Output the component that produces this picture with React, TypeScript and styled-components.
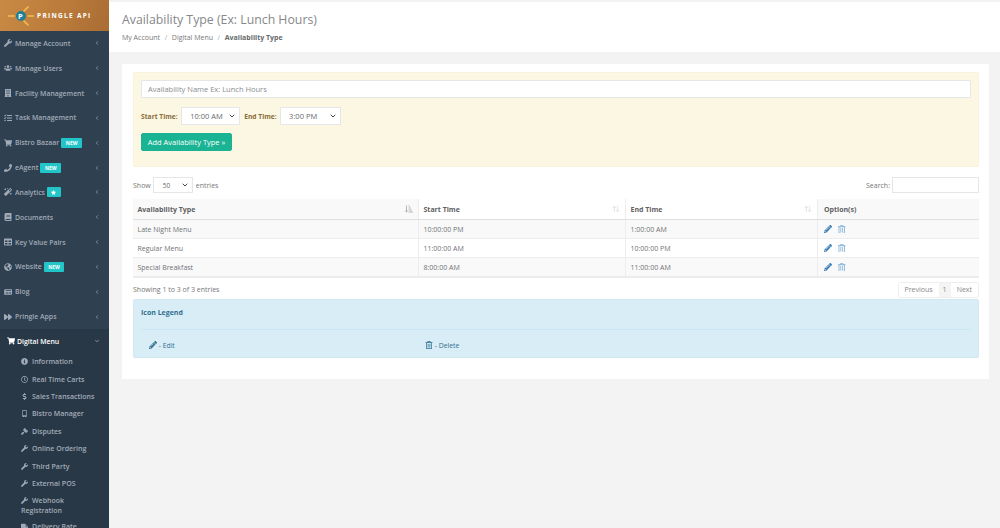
import styled, { createGlobalStyle } from "styled-components";
import { ReactNode } from "react";
import { ArrowUpDown, ChevronDown, ChevronLeft } from "lucide-react";
import {
  FaWrench,
  FaUsers,
  FaBuilding,
  FaTasks,
  FaShoppingCart,
  FaPhone,
  FaMagic,
  FaBook,
  FaTable,
  FaGlobeAmericas,
  FaNewspaper,
  FaForward,
  FaInfoCircle,
  FaRegClock,
  FaDollarSign,
  FaMobileAlt,
  FaGavel,
  FaTruck,
  FaPencilAlt,
  FaRegTrashAlt,
  FaStar,
  FaSortAmountDownAlt,
} from "react-icons/fa";

const GlobalStyle = createGlobalStyle`
  html, body {
    margin: 0;
    height: 100%;
    overflow: hidden;
    background: #f3f3f4;
    font-family: "Open Sans", "Liberation Sans", sans-serif;
    font-size: 7px;
    color: #676a6c;
  }
  * { box-sizing: border-box; }
`;

const Page = styled.div`
  display: flex;
  width: 1000px;
  height: 528px;
  overflow: hidden;
`;

const Sidebar = styled.nav`
  width: 109px;
  flex-shrink: 0;
  height: 528px;
  overflow: hidden;
  background: #2f4050;
`;

const Logo = styled.div`
  height: 31px;
  display: flex;
  align-items: center;
  gap: 3px;
  padding-left: 8px;
  background: linear-gradient(110deg, #c98a45 0%, #b97a3a 60%, #a96c33 100%);
  color: #fff;
  font-size: 6.5px;
  font-weight: 700;
  letter-spacing: 1.3px;
`;

const MenuItem = styled.div<{ $active?: boolean }>`
  height: 24.83px;
  display: flex;
  align-items: center;
  padding: ${(p) => (p.$active ? "0 9px 0 7px" : "0 9px 0 4px")};
  color: ${(p) => (p.$active ? "#fff" : "#a1abb8")};
  background: ${(p) => (p.$active ? "#293846" : "transparent")};
  font-weight: 600;
  font-size: 6.9px;
  white-space: nowrap;
  svg.lead {
    width: 8px;
    height: 8px;
    margin-right: ${(p) => (p.$active ? "2px" : "3px")};
    flex-shrink: 0;
  }
`;

const Caret = styled.span`
  margin-left: auto;
  display: flex;
  color: #a1abb8;
  svg {
    width: 6px;
    height: 6px;
  }
`;

const Badge = styled.span`
  display: inline-flex;
  align-items: center;
  justify-content: center;
  height: 10px;
  padding: 0 4.5px;
  margin-left: 2px;
  border-radius: 1px;
  background: #23c6c8;
  color: #fff;
  font-size: 5px;
  font-weight: 700;
  svg {
    width: 5px;
    height: 5px;
  }
`;

const SubMenu = styled.div`
  background: #293846;
`;

const SubItem = styled.div`
  min-height: 17.4px;
  padding: 3.5px 4px 3px 21px;
  color: #a1abb8;
  font-weight: 600;
  font-size: 7px;
  line-height: 9.6px;
  svg {
    width: 7px;
    height: 7px;
    margin-right: 4px;
    vertical-align: -1px;
  }
`;

const Main = styled.main`
  flex: 1;
  min-width: 0;
  padding-top: 2px;
  background: #f3f3f4;
`;

const Heading = styled.header`
  height: 50px;
  padding: 9px 13px 0;
  background: #fff;
`;

const Title = styled.h1`
  margin: 0;
  font-size: 12.3px;
  line-height: 18px;
  font-weight: 400;
  color: #85888a;
`;

const Crumbs = styled.div`
  display: flex;
  gap: 4.6px;
  margin-top: 4px;
  font-size: 7px;
  line-height: 10px;
  color: #777;
  b {
    font-weight: 700;
    color: #676a6c;
  }
  i {
    font-style: normal;
    color: #aaa;
  }
`;

const Card = styled.section`
  margin: 12px 11px 0 13px;
  height: 315px;
  padding: 8px 10px 0 11px;
  background: #fff;
`;

const Well = styled.div`
  height: 95px;
  padding: 7px 7px 0;
  background: #fbf7e2;
  border: 1px solid #f7f3dc;
  border-radius: 2px;
`;

const NameInput = styled.div`
  height: 18px;
  display: flex;
  align-items: center;
  padding: 0 6px;
  background: #fff;
  border: 1px solid #e5e6e7;
  border-radius: 1px;
  font-size: 7.5px;
  color: #8a8c8e;
`;

const TimeRow = styled.div`
  display: flex;
  align-items: center;
  margin-top: 9px;
  font-size: 6.7px;
  font-weight: 700;
  color: #8a6d3b;
`;

const SelectBox = styled.div<{ $w: number }>`
  width: ${(p) => p.$w}px;
  height: 18px;
  margin: 0 4px 0 3.5px;
  display: flex;
  align-items: center;
  justify-content: space-between;
  padding: 0 3px 0 8px;
  background: #fff;
  border: 1px solid #e5e6e7;
  color: #676a6c;
  font-size: 7.5px;
  font-weight: 400;
  svg {
    width: 8px;
    height: 8px;
    color: #444;
  }
`;

const PrimaryButton = styled.button`
  display: block;
  height: 18px;
  width: 91px;
  margin-top: 8px;
  padding: 0;
  border: 1px solid #1ab394;
  border-radius: 2px;
  background: #1ab394;
  color: #fff;
  font-family: inherit;
  font-size: 7.5px;
  font-weight: 400;
`;

const TableBar = styled.div`
  display: flex;
  align-items: center;
  justify-content: space-between;
  height: 16px;
  margin-top: 10px;
  font-size: 7px;
  color: #777;
`;

const Inline = styled.div`
  display: flex;
  align-items: center;
  gap: 2px;
`;

const LengthSelect = styled(SelectBox)`
  height: 16px;
  margin: 0 1px 0 0;
  padding: 0 3px 0 9px;
  font-size: 6.5px;
`;

const SearchBox = styled.div`
  width: 87px;
  height: 16px;
  background: #fff;
  border: 1px solid #e5e6e7;
`;

const Table = styled.div`
  margin-top: 6px;
  border-bottom: 1px solid #ebebeb;
`;

const Row = styled.div<{ $kind: "head" | "odd" | "even" }>`
  display: grid;
  grid-template-columns: 286px 207px 192px 1fr;
  height: ${(p) => (p.$kind === "head" ? "21px" : "19px")};
  background: ${(p) => (p.$kind === "even" ? "#fff" : "#f9f9f9")};
  border-bottom: ${(p) => (p.$kind === "head" ? "1px solid #dfdfdf" : "1px solid #ededed")};
  font-size: 7px;
  font-weight: ${(p) => (p.$kind === "head" ? 700 : 400)};
  color: ${(p) => (p.$kind === "head" ? "#5f6264" : "#707274")};
`;

const Cell = styled.div<{ $plain?: boolean }>`
  display: flex;
  align-items: center;
  justify-content: space-between;
  padding: 0 5px 0 4.5px;
  border-right: 1px solid #ededed;
  background: ${(p) => (p.$plain ? "#fff" : "transparent")};
  &:last-child {
    border-right: 0;
    justify-content: flex-start;
    gap: 6px;
    padding-left: 6px;
  }
`;

const SortIcon = styled.span<{ $strong?: boolean }>`
  display: flex;
  color: ${(p) => (p.$strong ? "#b5b7b9" : "#dedede")};
  svg {
    width: 8px;
    height: 8px;
  }
`;

const EditIcon = styled(FaPencilAlt)`
  width: 8px;
  height: 8px;
  color: #337ab7;
`;

const TrashIcon = styled(FaRegTrashAlt)`
  width: 7.5px;
  height: 8.5px;
  color: #7fb0d8;
`;

const TableFoot = styled.div`
  display: flex;
  align-items: center;
  justify-content: space-between;
  height: 19px;
  margin-top: 2px;
  font-size: 7px;
  color: #777;
`;

const Pager = styled.div`
  display: flex;
  height: 16px;
  border: 1px solid #eee;
  border-radius: 2px;
  color: #888;
`;

const PageCell = styled.span<{ $current?: boolean }>`
  display: flex;
  align-items: center;
  padding: 0 ${(p) => (p.$current ? "4px" : "6px")};
  background: ${(p) => (p.$current ? "#f4f4f4" : "#fff")};
`;

const Legend = styled.div`
  height: 59px;
  padding: 8px 7px 0;
  background: #d9edf7;
  border: 1px solid #d2e9f2;
  border-radius: 2px;
  color: #31708f;
`;

const LegendTitle = styled.div`
  font-size: 7px;
  font-weight: 700;
  line-height: 10px;
  padding-bottom: 11px;
  border-bottom: 1px solid #c9e7f3;
`;

const LegendItems = styled.div`
  display: grid;
  grid-template-columns: 276px 1fr;
  padding: 11px 0 0 8px;
  font-size: 6.8px;
  line-height: 10px;
  svg {
    width: 8px;
    height: 8px;
    vertical-align: -1px;
  }
`;

type Item = { label: string; icon: ReactNode; badge?: ReactNode };

const menu: Item[] = [
  { label: "Manage Account", icon: <FaWrench className="lead" /> },
  { label: "Manage Users", icon: <FaUsers className="lead" /> },
  { label: "Facility Management", icon: <FaBuilding className="lead" /> },
  { label: "Task Management", icon: <FaTasks className="lead" /> },
  { label: "Bistro Bazaar", icon: <FaShoppingCart className="lead" />, badge: "NEW" },
  { label: "eAgent", icon: <FaPhone className="lead" />, badge: "NEW" },
  { label: "Analytics", icon: <FaMagic className="lead" />, badge: <FaStar /> },
  { label: "Documents", icon: <FaBook className="lead" /> },
  { label: "Key Value Pairs", icon: <FaTable className="lead" /> },
  { label: "Website", icon: <FaGlobeAmericas className="lead" />, badge: "NEW" },
  { label: "Blog", icon: <FaNewspaper className="lead" /> },
  { label: "Pringle Apps", icon: <FaForward className="lead" /> },
];

const subMenu = [
  { label: "Information", icon: <FaInfoCircle /> },
  { label: "Real Time Carts", icon: <FaRegClock /> },
  { label: "Sales Transactions", icon: <FaDollarSign /> },
  { label: "Bistro Manager", icon: <FaMobileAlt /> },
  { label: "Disputes", icon: <FaGavel /> },
  { label: "Online Ordering", icon: <FaWrench /> },
  { label: "Third Party", icon: <FaWrench /> },
  { label: "External POS", icon: <FaWrench /> },
  { label: "Webhook Registration", icon: <FaWrench /> },
  { label: "Delivery Rate", icon: <FaTruck /> },
];

const rows = [
  ["Late Night Menu", "10:00:00 PM", "1:00:00 AM"],
  ["Regular Menu", "11:00:00 AM", "10:00:00 PM"],
  ["Special Breakfast", "8:00:00 AM", "11:00:00 AM"],
];

const LogoMark = () => (
  <svg width="26" height="22" viewBox="0 0 26 22">
    <g stroke="#f2c14e" strokeWidth="1.6" strokeLinecap="round">
      <path d="M0 11h6M20 11h6M16 6l4-4M16 16l4 4" />
    </g>
    <circle cx="13" cy="11" r="5" fill="#1f7f96" />
    <text x="13" y="14" textAnchor="middle" fontSize="7.5" fontWeight="700" fill="#fff">
      P
    </text>
  </svg>
);

const App = () => (
  <>
    <GlobalStyle />
    <Page>
      <Sidebar>
        <Logo>
          <LogoMark />
          PRINGLE API
        </Logo>
        {menu.map((m) => (
          <MenuItem key={m.label}>
            {m.icon}
            {m.label}
            {m.badge && <Badge>{m.badge}</Badge>}
            <Caret>
              <ChevronLeft strokeWidth={2.5} />
            </Caret>
          </MenuItem>
        ))}
        <MenuItem $active>
          <FaShoppingCart className="lead" />
          Digital Menu
          <Caret>
            <ChevronDown strokeWidth={3} />
          </Caret>
        </MenuItem>
        <SubMenu>
          {subMenu.map((s) => (
            <SubItem key={s.label}>
              {s.icon}
              {s.label}
            </SubItem>
          ))}
        </SubMenu>
      </Sidebar>
      <Main>
        <Heading>
          <Title>Availability Type (Ex: Lunch Hours)</Title>
          <Crumbs>
            <span>My Account</span>
            <i>/</i>
            <span>Digital Menu</span>
            <i>/</i>
            <b>Availability Type</b>
          </Crumbs>
        </Heading>
        <Card>
          <Well>
            <NameInput>Availability Name Ex: Lunch Hours</NameInput>
            <TimeRow>
              Start Time:
              <SelectBox $w={59}>
                10:00 AM
                <ChevronDown strokeWidth={3} />
              </SelectBox>
              End Time:
              <SelectBox $w={61}>
                3:00 PM
                <ChevronDown strokeWidth={3} />
              </SelectBox>
            </TimeRow>
            <PrimaryButton>Add Availability Type »</PrimaryButton>
          </Well>
          <TableBar>
            <Inline>
              Show
              <LengthSelect $w={40}>
                50
                <ChevronDown strokeWidth={3} />
              </LengthSelect>
              entries
            </Inline>
            <Inline>
              Search:
              <SearchBox />
            </Inline>
          </TableBar>
          <Table>
            <Row $kind="head">
              <Cell>
                Availability Type
                <SortIcon $strong>
                  <FaSortAmountDownAlt />
                </SortIcon>
              </Cell>
              <Cell $plain>
                Start Time
                <SortIcon>
                  <ArrowUpDown strokeWidth={2.5} />
                </SortIcon>
              </Cell>
              <Cell $plain>
                End Time
                <SortIcon>
                  <ArrowUpDown strokeWidth={2.5} />
                </SortIcon>
              </Cell>
              <Cell>Option(s)</Cell>
            </Row>
            {rows.map((r, i) => (
              <Row key={r[0]} $kind={i % 2 === 0 ? "odd" : "even"}>
                <Cell>{r[0]}</Cell>
                <Cell>{r[1]}</Cell>
                <Cell>{r[2]}</Cell>
                <Cell>
                  <EditIcon />
                  <TrashIcon />
                </Cell>
              </Row>
            ))}
          </Table>
          <TableFoot>
            Showing 1 to 3 of 3 entries
            <Pager>
              <PageCell>Previous</PageCell>
              <PageCell $current>1</PageCell>
              <PageCell>Next</PageCell>
            </Pager>
          </TableFoot>
          <Legend>
            <LegendTitle>Icon Legend</LegendTitle>
            <LegendItems>
              <span>
                <FaPencilAlt /> - Edit
              </span>
              <span>
                <FaRegTrashAlt /> - Delete
              </span>
            </LegendItems>
          </Legend>
        </Card>
      </Main>
    </Page>
  </>
);

export default App;
